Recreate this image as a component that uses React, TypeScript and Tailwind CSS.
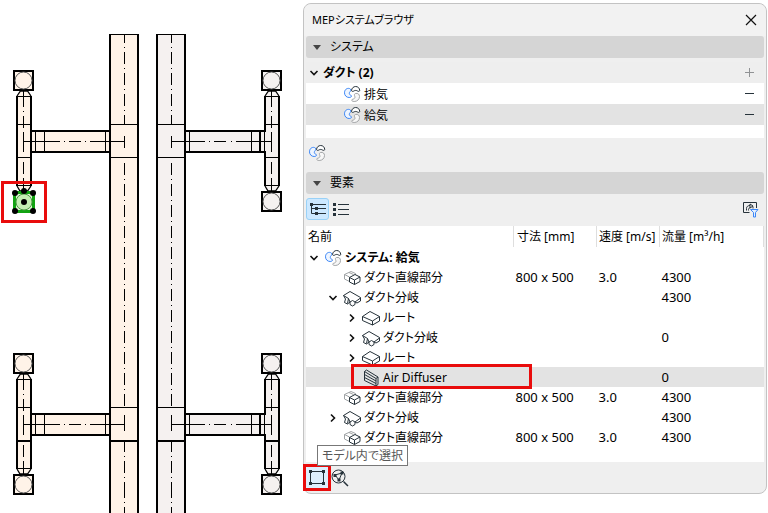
import React from "react";

type IconProps = { className?: string };

const INK = "#26323a";

function FanIcon({ className = "" }: IconProps) {
  return (
    <svg width="18" height="18" viewBox="0 0 18 18" fill="none" strokeLinejoin="round" className={`shrink-0 ${className}`} aria-hidden="true">
      <path d="M6.500 3.500C3.500 2.800 1.500 5 1.500 7.800c0 2.700 2 4.700 4.700 4.700 1.600 0 2.600-1 2.300-1.700-.3-.6-2-.6-2.200-2.300-.2-1.500 1.400-1.800 1.500-3.200 0-.9-.5-1.600-1.300-1.800Z" stroke="#3b86f7" fill="#eef5ff" />
      <path d="M8.500 5.500c.2-2.300 2-4 4.200-4s4 1.700 4 4c0 .8-1.200 1.200-2 .6-1.200-.9-2.800-.9-4 0-.8.6-2.200.2-2.200-.6Z" stroke={INK} fill="#fff" />
      <path d="M12.500 8.500c2.500-.6 4 .9 4 3 0 2.900-2.300 5-5.300 5-1.500 0-2.700-.7-2.500-1.500.2-.9 1.800-.6 2.800-1.700.9-1 .3-1.700 0-2.700-.3-.9.100-1.900 1-2.100Z" stroke="#a3a5a7" fill="#f7f7f7" />
    </svg>
  );
}

function StraightDuctIcon() {
  return (
    <svg width="18" height="18" viewBox="0 0 18 18" fill="none" strokeLinejoin="round" className="shrink-0" aria-hidden="true">
      <path d="m6.500 12.500-5-2.500V5.500l6.500-3 4.500 2v3" stroke="#a0a4a6" />
      <path d="M1.500 5.500 6.500 8M6 3.500l4.500 2" stroke="#a0a4a6" />
      <path d="M6.500 8.500 12 5.500l5 2.500v4.500l-5.500 3-5-2.500Z" stroke={INK} fill="#fff" />
      <path d="m6.500 8.500 5 2.500L17 8M11.500 11v4.500" stroke={INK} />
    </svg>
  );
}

function BranchIcon() {
  return (
    <svg width="18" height="18" viewBox="0 0 18 18" fill="none" strokeLinejoin="round" stroke={INK} className="shrink-0" aria-hidden="true">
      <path d="M.5 6.500 7 2.500l10.500 6V12L14 14l-2-1v2.500L9.500 17 7 15.500V13l-2.500 2-3-1.500 1-3.500Z" fill="#fff" />
      <path d="m.5 6.500 5 3 1.500 3.500 2.500-1.500L12 13l5.500-4M5.500 9.500l-1 5" />
    </svg>
  );
}

function RouteIcon() {
  return (
    <svg width="18" height="18" viewBox="0 0 18 18" fill="none" strokeLinejoin="round" stroke={INK} className="shrink-0" aria-hidden="true">
      <path d="m.5 7.500 7.500-5 9.500 5V12L10.500 16l-10-4.500Z" fill="#fff" />
      <path d="m.5 7.500 10 4.500 7-4.500M10.500 12v4" />
    </svg>
  );
}

function DiffuserIcon() {
  return (
    <svg width="18" height="18" viewBox="0 0 18 18" fill="none" strokeLinejoin="round" stroke={INK} className="shrink-0" aria-hidden="true">
      <path d="m2.500 2.500 2-1.500 11.500 7v7.500l-2 1.500-11.500-5.500Z" />
      <path d="M2.500 2.500 14 9.500l2-1.500M14 9.500V17M2.500 5.500 14 12M2.500 8.500 14 14.500" />
    </svg>
  );
}

function Chevron({ open }: { open: boolean }) {
  return (
    <svg width="12" height="12" viewBox="0 0 12 12" fill="none" stroke="#111" strokeWidth="1.600" aria-hidden="true">
      <path d={open ? "m2.500 4 3.500 3.500L9.500 4" : "M4 2.500 7.500 6 4 9.500"} />
    </svg>
  );
}

/** One half of the plan: a branch duct with a diffuser at each end. */
function Branch({ side, lower }: { side: "left" | "right"; lower: boolean }) {
  const left = side === "left";
  const fill = left ? "#fff3e8" : "#f5f1f0";
  const cx = left ? 23.5 : 271.5;
  const a = cx - 6.5;
  const b = cx + 7.5;
  const inner = left ? b : a;
  const outer = left ? a : b;
  const main = left ? 110 : 157;
  const h0 = left ? 31 : 185;
  const h1 = left ? 110 : 265;
  const joints = left ? [35.5, 44.5, 105.5] : [189.5, 251.5];
  const lastWidth = lower ? 2 : 1;
  const lastY = lower ? 158 : 157.5;
  const selected = left && !lower;
  return (
    <g transform={lower ? "translate(0 283)" : undefined} stroke="#000" fill="none">
      <rect x={h0} y="131" width={h1 - h0} height="21" fill={fill} strokeWidth="2" />
      <rect x={a} y="96" width="14" height="89" fill={fill} stroke="none" />
      <rect x={main + 1} y="125" width="26" height="32" fill={fill} stroke="none" />
      <path d={`M${outer} 96V186M${inner} 96V132M${inner} 151V186`} strokeWidth="2" />
      <path d={`M${inner - 0.5} 132V151`} />
      {joints.map((x) => (
        <path key={x} d={`M${x} 132V151`} />
      ))}
      {!left && <path d="M260 132V151" strokeWidth="2" />}
      <path d={`M${a} 124.500H${b}M${main} 124.500h28M${a} 96.500H${b}M${a} 185.500H${b}`} />
      <path d={`M${a} ${lastY}H${b}M${main} ${lastY}h28`} strokeWidth={lastWidth} />
      <path d={`M${a} 96 ${cx - 3} 91H${cx + 4}L${b} 96M${a} 186l3 5H${cx + 4}L${b} 186`} fill={fill} strokeWidth="1.300" />
      <path d={`M${cx} 91V107M${cx} 111v1M${cx} 116v12M${cx} 132v20M${cx} 157v1M${cx} 162v12M${cx} 178v13`} />
      <path d={left ? "M23 141.500H60M64 141.500h1M69 141.500h12M85 141.500h1M90 141.500h35" : "M171 141.500h34M209 141.500h1M214 141.500h12M231 141.500h1M236 141.500h36"} />
      <rect x={cx - 9.5} y="71" width="19" height="19" fill={fill} strokeWidth="2" />
      <circle cx={cx} cy="80.500" r="8.500" stroke="#555" />
      {selected ? (
        <g>
          <rect x="14.500" y="192.500" width="19" height="19" fill="#dff5d2" stroke="#12a312" strokeWidth="3" />
          <circle cx="24" cy="202" r="8" fill="#c5f0b4" stroke="#4c9a45" />
          {[[15, 193], [24, 191], [33, 193], [24, 202], [15, 211], [33, 211]].map(([x, y]) => (
            <circle key={`${x}-${y}`} cx={x} cy={y} r="3" fill="#000" stroke="none" />
          ))}
          <rect x="2.500" y="182.500" width="43" height="39" stroke="#e90c0c" strokeWidth="3" />
        </g>
      ) : (
        <g>
          <rect x={cx - 9.5} y="192" width="19" height="19" fill={fill} strokeWidth="2" />
          <circle cx={cx} cy="201.500" r="8.500" stroke="#555" />
        </g>
      )}
    </g>
  );
}

function MainDuct({ x, fill }: { x: number; fill: string }) {
  return (
    <g stroke="#000">
      <path d={`M${x} 513V34.500h28V513`} fill={fill} stroke="none" />
      <path d={`M${x} 513V34M${x + 28} 513V34`} strokeWidth="2" />
      <path d={`M${x} 34.500h28`} />
      <path d={`M${x + 14.5} 35V158`} strokeDasharray="12 4 1 4" strokeDashoffset="4" />
      <path d={`M${x + 14.5} 163V408`} strokeDasharray="12 4 1 4" />
      <path d={`M${x + 14.5} 415V513`} strokeDasharray="16 4 1 4 12 4 1 4 12 4 1 4" />
    </g>
  );
}

function DuctPlan() {
  return (
    <svg width="303" height="513" viewBox="0 0 303 513" className="shrink-0" role="img" aria-label="Duct plan">
      <MainDuct x={110} fill="#fff3e8" />
      <MainDuct x={157} fill="#f5f1f0" />
      <Branch side="left" lower={false} />
      <Branch side="right" lower={false} />
      <Branch side="left" lower />
      <Branch side="right" lower />
      <path d="M124.500 136v12M171.500 136v12M124.500 415v16M171.500 415v16" stroke="#000" />
    </svg>
  );
}

function SectionBar({ title }: { title: string }) {
  return (
    <button type="button" className="mx-0.5 flex h-[22px] items-center rounded-[3px] bg-[#d5d5d5] pl-[7px] text-left">
      <svg width="8" height="5" viewBox="0 0 8 5" aria-hidden="true">
        <path d="M0 0h8L4 5Z" fill="#444" />
      </svg>
      <span className="ml-[9px]">{title}</span>
    </button>
  );
}

type Row = {
  level: 0 | 1 | 2;
  name: string;
  icon: React.ReactNode;
  open?: boolean;
  size?: string;
  speed?: string;
  flow?: string;
  selected?: boolean;
};

const rows: Row[] = [
  { level: 0, name: "システム: 給気", icon: <FanIcon />, open: true },
  { level: 1, name: "ダクト直線部分", icon: <StraightDuctIcon />, size: "800 x 500", speed: "3.0", flow: "4300" },
  { level: 1, name: "ダクト分岐", icon: <BranchIcon />, open: true, flow: "4300" },
  { level: 2, name: "ルート", icon: <RouteIcon />, open: false },
  { level: 2, name: "ダクト分岐", icon: <BranchIcon />, open: false, flow: "0" },
  { level: 2, name: "ルート", icon: <RouteIcon />, open: false },
  { level: 2, name: "Air Diffuser", icon: <DiffuserIcon />, flow: "0", selected: true },
  { level: 1, name: "ダクト直線部分", icon: <StraightDuctIcon />, size: "800 x 500", speed: "3.0", flow: "4300" },
  { level: 1, name: "ダクト分岐", icon: <BranchIcon />, open: false, flow: "4300" },
  { level: 1, name: "ダクト直線部分", icon: <StraightDuctIcon />, size: "800 x 500", speed: "3.0", flow: "4300" },
];

const indent = ["pl-[2px]", "pl-[21px]", "pl-[40px]"];

function ElementRow({ row }: { row: Row }) {
  return (
    <tr className={`h-5 ${row.selected ? "bg-[#e3e3e3]" : ""}`}>
      <td className="relative p-0">
        <div className={`flex h-5 items-center whitespace-nowrap pt-0.5 ${indent[row.level]}`}>
          {row.open === undefined ? (
            <span className="w-3" />
          ) : (
            <button type="button" aria-label={row.name} aria-expanded={row.open} className="w-3">
              <Chevron open={row.open} />
            </button>
          )}
          <span className="ml-1 mr-[3px]">{row.icon}</span>
          <span className={row.level === 0 ? "font-bold" : ""}>{row.name}</span>
        </div>
        {row.selected && (
          <span className="pointer-events-none absolute -top-[3px] left-[45px] h-[25px] w-[181px] border-[3px] border-[#e90c0c]" />
        )}
      </td>
      <td className="py-0 pl-[2px] pr-0 text-[13px]">{row.size}</td>
      <td className="py-0 pl-[2px] pr-0 text-[13px]">{row.speed}</td>
      <td className="py-0 pl-[2px] pr-0 text-[13px]">{row.flow}</td>
    </tr>
  );
}

function Minus() {
  return (
    <svg width="11" height="11" viewBox="0 0 11 11" stroke={INK} aria-hidden="true">
      <path d="M1 5.500h9" />
    </svg>
  );
}

function SystemRow({ name, selected }: { name: string; selected?: boolean }) {
  return (
    <li className={`flex h-[21px] items-center pl-[37px] pr-[9px] ${selected ? "bg-[#e3e3e3]" : "bg-white"}`}>
      <FanIcon />
      <span className="ml-[3px] flex-1 pt-0.5">{name}</span>
      <button type="button" aria-label={`${name} 削除`}>
        <Minus />
      </button>
    </li>
  );
}

export default function App() {
  return (
    <main className="flex items-start bg-white text-[12px] leading-5 text-black [font-family:'Noto_Sans','Noto_Sans_CJK_JP',sans-serif] [font-feature-settings:'palt']">
      <DuctPlan />
      <section className="mr-px mt-[3px] flex min-w-0 flex-1 flex-col rounded-lg border border-[#c3c3c3] bg-[#efefef]">
        <header className="flex h-8 items-center justify-between rounded-t-lg bg-[#f2f2f2] pl-2 pr-[9px]">
          <h1 className="text-[11px]">MEPシステムブラウザ</h1>
          <button type="button" aria-label="閉じる">
            <svg width="12" height="12" viewBox="0 0 12 12" stroke="#111" strokeWidth="1.200" aria-hidden="true">
              <path d="m1 1 10 10M11 1 1 11" />
            </svg>
          </button>
        </header>

        <SectionBar title="システム" />
        <div className="mx-0.5 mt-1 bg-white pb-[13px]">
          <div className="flex h-[21px] items-center bg-[#eeeeee] pl-[2px] pr-[9px]">
            <button type="button" aria-label="ダクト" aria-expanded="true" className="w-3">
              <Chevron open />
            </button>
            <span className="ml-[3px] flex-1 text-[12px] font-bold">ダクト (2)</span>
            <button type="button" aria-label="追加">
              <svg width="11" height="11" viewBox="0 0 11 11" stroke="#909294" aria-hidden="true">
                <path d="M1 5.500h9M5.500 1v9" />
              </svg>
            </button>
          </div>
          <ul>
            <SystemRow name="排気" />
            <SystemRow name="給気" selected />
          </ul>
        </div>
        <div className="flex h-[34px] items-center pb-1 pl-1">
          <button type="button" aria-label="システム">
            <FanIcon />
          </button>
        </div>

        <SectionBar title="要素" />
        <div className="mx-0.5 flex h-8 items-center pb-0.5">
          <button type="button" aria-label="ツリー表示" className="flex h-[22px] w-[23px] items-center justify-center rounded-[3px] border border-[#99d1f7] bg-[#cce8ff]">
            <svg width="17" height="14" viewBox="0 0 17 14" fill="none" stroke={INK} aria-hidden="true">
              <path d="M2.500 2v9.500h4M2.500 6.500h4M4 2.500h13M7 6.500h10M7 11.500h10" />
              <path d="M1 1h3v3H1ZM6 5h3v3H6ZM6 10h3v3H6Z" fill={INK} stroke="none" />
            </svg>
          </button>
          <button type="button" aria-label="リスト表示" className="ml-[3px] flex-none">
            <svg width="17" height="14" viewBox="0 0 17 14" fill="none" stroke={INK} aria-hidden="true">
              <path d="M6 2.500h11M6 7.500h11M6 12.500h11" />
              <path d="M1 1h3v3H1ZM1 6h3v3H1ZM1 11h3v3H1Z" fill={INK} stroke="none" />
            </svg>
          </button>
          <button type="button" aria-label="フィルター" className="ml-auto mr-[5px]">
            <svg width="17" height="17" viewBox="0 0 17 17" fill="none" aria-hidden="true">
              <path d="M7.500 11.500h-6v-10h13V7" stroke={INK} />
              <path d="M4.500 9.500V7.500C4.500 5.500 6 4.500 8 4.500M8 3v4l3-2ZM6.500 9.500V8.500c0-1 .5-1.500 1.500-1.500M11 5.500v2" stroke={INK} />
              <path d="M8.500 8.500h7.500l-2.500 3V16h-2v-4.500Z" fill="#e4f0ff" stroke="#3b86f7" />
            </svg>
          </button>
        </div>

        <div className="mx-0.5 bg-white pb-[15px]">
          <table className="w-full table-fixed border-collapse text-left">
            <colgroup>
              <col />
              <col className="w-[83px]" />
              <col className="w-[63px]" />
              <col className="w-[104px]" />
            </colgroup>
            <thead>
              <tr className="h-[21px] whitespace-nowrap">
                <th className="border-r border-[#dedede] py-0 pl-[2px] pr-0 font-normal">名前</th>
                <th className="border-r border-[#dedede] py-0 pl-[3px] pr-0 font-normal">寸法 [mm]</th>
                <th className="border-r border-[#dedede] py-0 pl-[2px] pr-0 font-normal">速度 [m/s]</th>
                <th className="border-r border-[#dedede] py-0 pl-[2px] pr-0 font-normal">流量 [m³/h]</th>
              </tr>
            </thead>
            <tbody>
              {rows.map((row, i) => (
                <ElementRow key={i} row={row} />
              ))}
            </tbody>
          </table>
        </div>

        <footer className="flex h-[31px] items-center">
          <div className="relative -ml-px">
            <button type="button" aria-describedby="select-tip" aria-label="モデル内で選択" className="flex h-[27px] w-7 items-center justify-center border-[3px] border-[#e90c0c] bg-[#ddeffd]">
              <svg width="16" height="17" viewBox="0 0 16 17" fill="none" stroke={INK} aria-hidden="true">
                <path d="M1.500 2.500h13v12h-13Z" />
                <path d="M0 1h3v3H0ZM13 1h3v3h-3ZM0 13h3v3H0ZM13 13h3v3h-3Z" fill={INK} stroke="none" />
              </svg>
            </button>
            <div id="select-tip" role="tooltip" className="absolute -top-[19px] left-[14px] h-[21px] whitespace-nowrap border border-[#777777] bg-white px-1 text-[12px] leading-[19px] text-[#575757]">
              モデル内で選択
            </div>
          </div>
          <button type="button" aria-label="モデル内で表示">
            <svg width="18" height="18" viewBox="0 0 18 18" fill="none" stroke={INK} aria-hidden="true">
              <circle cx="7.500" cy="7.500" r="6.500" />
              <path d="m12.500 12.500 4.500 4.500" strokeWidth="1.500" />
              <path d="m4 6 7-2L8 11Z" />
              <path d="M2.500 5h3v3h-3ZM9.500 2.500h3v3h-3ZM6.500 9.500h3v3h-3Z" fill={INK} stroke="none" />
            </svg>
          </button>
        </footer>
      </section>
    </main>
  );
}
